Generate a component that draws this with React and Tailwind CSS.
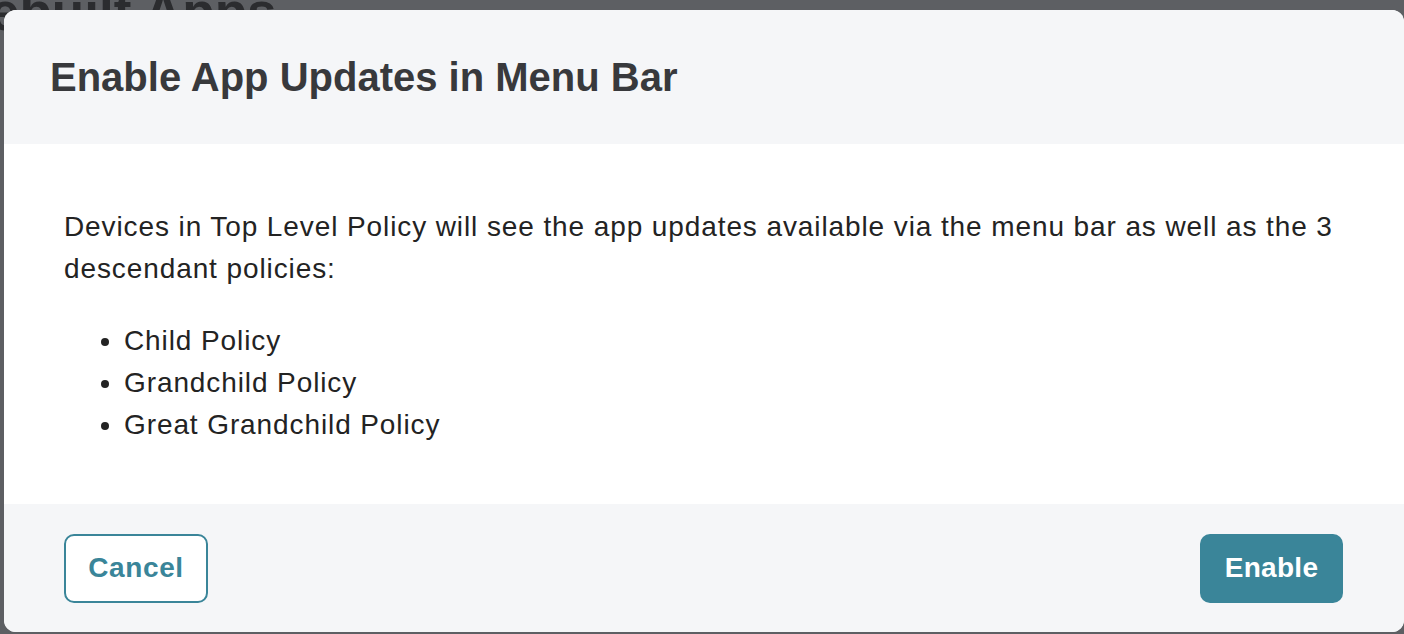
export default function App() {
  const policies = ["Child Policy", "Grandchild Policy", "Great Grandchild Policy"];

  return (
    <div className="relative h-[634px] w-[1404px] overflow-hidden bg-[#5d5f63] font-['Liberation_Sans',Arial,sans-serif]">
      {/* page behind the overlay */}
      <h1 className="absolute left-[-66px] top-[-15px] whitespace-nowrap text-[53px] font-bold leading-none text-[#2b2c2f]">
        Prebuilt Apps
      </h1>

      {/* Modal */}
      <div className="absolute left-[4px] top-[10px] flex h-[622px] w-[1400px] flex-col overflow-hidden rounded-[12px] bg-white">
        <div className="flex h-[134px] shrink-0 items-center bg-[#f5f6f8] pl-[46px]">
          <h2 className="text-[40px] font-bold leading-none text-[#38393c]">
            Enable App Updates in Menu Bar
          </h2>
        </div>

        <div className="h-[360px] shrink-0 bg-white pb-[58px] pl-[60px] pr-[50px] pt-[62px] text-[28px] leading-[42px] tracking-[0.9px] text-[#232323]">
          <p className="mb-[30px]">
            Devices in Top Level Policy will see the app updates available via the menu bar as well as the 3
            descendant policies:
          </p>
          <ul className="list-disc pl-[60px]">
            {policies.map((p) => (
              <li key={p}>{p}</li>
            ))}
          </ul>
        </div>

        <div className="flex flex-1 items-center justify-between bg-[#f5f6f8] pl-[60px] pr-[61px]">
          <button className="h-[69px] w-[144px] rounded-[10px] border-2 border-[#3a8599] bg-white text-[28px] font-bold tracking-[0.6px] text-[#3a8599]">
            Cancel
          </button>
          <button className="h-[69px] w-[143px] rounded-[10px] bg-[#3a8599] text-[28px] font-bold tracking-[0.3px] text-white">
            Enable
          </button>
        </div>
      </div>
    </div>
  );
}
